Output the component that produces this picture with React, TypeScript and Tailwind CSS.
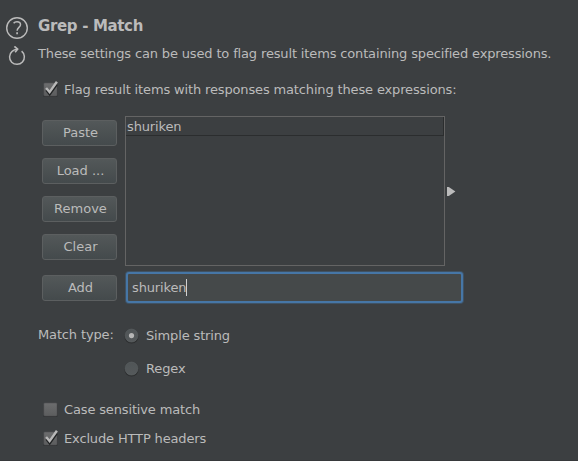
import type { ReactNode } from 'react';

function HelpIcon() {
  return (
    <svg width="22" height="22" viewBox="0 0 22 22" fill="none" stroke="#bbbbbb" className="block">
      <circle cx="11" cy="11" r="10.3" strokeWidth="1.4" />
      <path d="M7.6 6.2C8.4 5.2 9.5 4.8 11 4.8c2.1 0 3.5 1.1 3.5 2.9 0 2.6-3.4 2.9-3.4 6" strokeWidth="1.5" />
      <path d="M11.1 15.3v2" strokeWidth="1.7" />
    </svg>
  );
}

function ResetIcon() {
  return (
    <svg width="18" height="20" viewBox="0 0 18 20" fill="none" stroke="#bbbbbb" className="block">
      <path d="M9.3 3.3C7.2 3.4 5.5 4.1 4.1 5.4A7.4 7.4 0 1 0 13.6 5.2" strokeWidth="1.5" />
      <path d="M6.4 0.4L9.6 3.2L7.1 6.2" strokeWidth="1.7" />
    </svg>
  );
}

function Checkbox({ checked, children }: { checked?: boolean; children: ReactNode }) {
  return (
    <label className="flex h-4 items-center">
      <svg width="17" height="16" viewBox="0 0 17 16" className="block overflow-visible">
        <defs>
          <linearGradient id="box" x1="0" y1="0" x2="0" y2="1">
            <stop offset="0" stopColor="#6c6d6e" />
            <stop offset="1" stopColor="#5c5d5e" />
          </linearGradient>
        </defs>
        <rect x="1.3" y="2" width="14.2" height="13" rx="1" fill="#2e3031" />
        <rect x="1.8" y="1" width="13.2" height="13" rx="1" fill="url(#box)" stroke="#515354" strokeWidth="0.6" />
        {checked && (
          <>
            <path d="M4.2 8.2L7.7 12.5L15 2.4" fill="none" stroke="#222425" strokeWidth="2" />
            <path d="M4.1 6L7.6 10.1L14.9 -0.3" fill="none" stroke="#b8b8b8" strokeWidth="2.4" />
          </>
        )}
      </svg>
      <span className="ml-[5px]">{children}</span>
    </label>
  );
}

function Radio({ checked, children }: { checked?: boolean; children: ReactNode }) {
  return (
    <label className="flex h-4 items-center">
      <svg width="16" height="16" viewBox="0 0 16 16" className="block">
        <defs>
          <linearGradient id="radio" x1="0" y1="0" x2="0" y2="1">
            <stop offset="0" stopColor="#505557" />
            <stop offset="1" stopColor="#55595b" />
          </linearGradient>
        </defs>
        <circle cx="7.5" cy="8.4" r="7.1" fill="#2c2e2f" />
        <circle cx="7.5" cy="7.6" r="6.5" fill="url(#radio)" stroke="#5d6163" strokeWidth="0.6" />
        {checked && <circle cx="7.5" cy="7.6" r="2.6" fill="#b6b6b6" />}
      </svg>
      <span className="ml-1.5">{children}</span>
    </label>
  );
}

function Button({ children }: { children: ReactNode }) {
  return (
    <button className="flex h-[26px] w-[75px] items-center justify-center rounded-[3px] border border-[#5c5f60] bg-linear-to-b from-[#535859] to-[#444a4c] pl-0.5 leading-4 tracking-normal">
      {children}
    </button>
  );
}

export default function App() {
  return (
    <main
      className="flex h-[461px] w-[578px] overflow-hidden border-b border-[#37393b] bg-[#3c3f41] text-[13px] leading-4 tracking-[-0.145px] whitespace-nowrap text-[#bbbbbb]"
      style={{ fontFamily: '"DejaVu Sans", sans-serif' }}
    >
      <aside className="flex w-[38px] shrink-0 flex-col gap-[7px] pt-[17px] pl-1.5">
        <HelpIcon />
        <div className="pl-[2px]">
          <ResetIcon />
        </div>
      </aside>

      <section className="flex flex-col">
        <h1 className="mt-[17px] h-[18px] text-[15px] leading-[18px] font-bold tracking-[-0.34px]">Grep - Match</h1>
        <p className="mt-[11px]">These settings can be used to flag result items containing specified expressions.</p>

        <div className="mt-5 ml-1">
          <Checkbox checked>Flag result items with responses matching these expressions:</Checkbox>
        </div>

        <div className="mt-[18px] ml-1 flex">
          <div className="mt-1 flex flex-col gap-3">
            <Button>Paste</Button>
            <Button>Load ...</Button>
            <Button>Remove</Button>
            <Button>Clear</Button>
          </div>
          <div className="ml-2 h-[150px] w-80 border border-[#646464]">
            <div className="h-[19px] border-r border-b border-[#2b2d2e] pt-0.5 pl-px">shuriken</div>
          </div>
          <svg width="9" height="9" viewBox="0 0 9 9" className="mt-[71px] ml-0.5 block">
            <path d="M0 0H1.8L8.4 4.5L1.8 9H0Z" fill="#bbbbbb" />
          </svg>
        </div>

        <div className="mt-1.5 ml-1 flex items-start">
          <div className="mt-[3px]">
            <Button>Add</Button>
          </div>
          <div className="ml-[9px] flex h-[31px] w-[337px] items-center rounded-[3px] border-2 border-[#4676a6] bg-[#45494a] pl-1 shadow-[0_0_0_1px_#3f5264]">
            <span>shuriken</span>
            <span className="h-[17px] w-px bg-[#d0d0d0]" />
          </div>
        </div>

        <div className="mt-6 flex">
          <span className="w-[86px]">Match type:</span>
          <div className="flex flex-col gap-[17px] pt-px">
            <Radio checked>Simple string</Radio>
            <Radio>Regex</Radio>
          </div>
        </div>

        <div className="mt-[25px] ml-1 flex flex-col gap-[13px]">
          <Checkbox>Case sensitive match</Checkbox>
          <Checkbox checked>Exclude HTTP headers</Checkbox>
        </div>
      </section>
    </main>
  );
}
